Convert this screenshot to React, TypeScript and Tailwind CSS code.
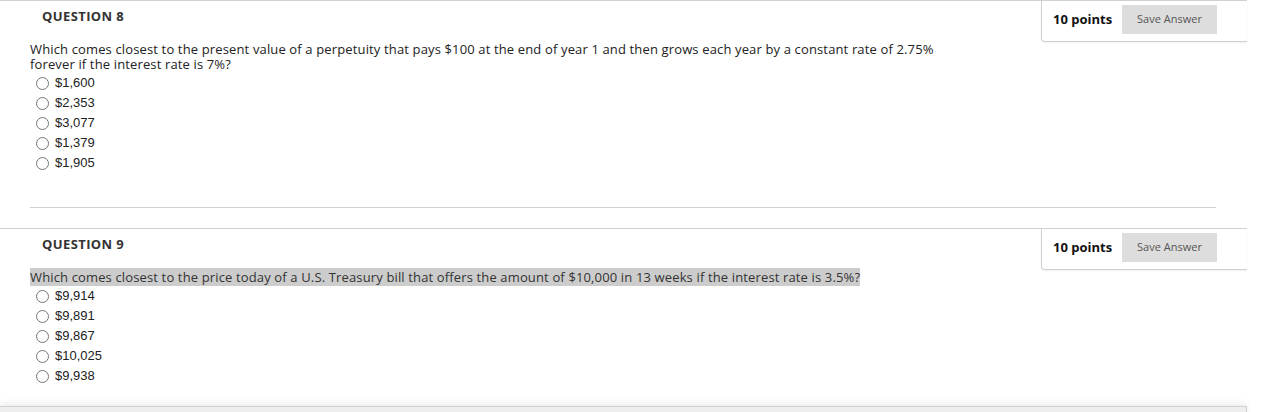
import React from "react";

const open = { fontFamily: '"Open Sans", "Noto Sans", sans-serif' };
const arial = { fontFamily: '"Liberation Sans", Arial, sans-serif' };

function Radio() {
  return (
    <span className="inline-block w-[13px] h-[13px] rounded-full border border-[#767676] bg-white shrink-0" />
  );
}

function Header({ n }: { n: number }) {
  return (
    <div className="flex justify-between border-t border-[#d0d0d0] h-[41px]">
      <div className="pl-[42px] pt-[6px] text-[13px] tracking-[0.4px] font-bold text-[#333]" style={open}>
        QUESTION {n}
      </div>
      <div className="w-[206px] h-[41px] pb-[3px] border-l border-b border-[#d0d0d0] rounded-bl-[4px] flex items-center shadow-[0_1px_2px_rgba(0,0,0,0.06)]">
        <span className="ml-[11px] text-[13px] font-bold text-[#111]" style={open}>
          10 points
        </span>
        <button
          className="ml-auto mr-[30px] w-[95px] h-[29px] bg-[#dddddd] text-[11px] text-[#555]"
          style={open}
        >
          Save Answer
        </button>
      </div>
    </div>
  );
}

function Options({ items }: { items: string[] }) {
  return (
    <div className="flex flex-col">
      {items.map((t) => (
        <div key={t} className="h-[20px] flex items-center pl-[6px] gap-[6px]">
          <Radio />
          <span className="text-[13px] text-[#222]" style={arial}>
            {t}
          </span>
        </div>
      ))}
    </div>
  );
}

export default function App() {
  return (
    <div className="w-[1266px] h-[412px] bg-white overflow-hidden">
      <div className="w-[1247px]">
        <Header n={8} />
        <div className="pl-[30px]">
          <p className="text-[13px] tracking-[0.14px] leading-[15px] text-[#222] pt-[1px] mb-[1px]" style={open}>
            Which comes closest to the present value of a perpetuity that pays $100 at the end of year 1 and then grows each year by a constant rate of 2.75%
            <br />
            forever if the interest rate is 7%?
          </p>
          <Options items={["$1,600", "$2,353", "$3,077", "$1,379", "$1,905"]} />
          <div className="mt-[34px] w-[1186px] border-t border-[#d0d0d0]" />
        </div>
        <div className="mt-[20px]">
          <Header n={9} />
          <div className="pl-[30px]">
            <p className="text-[13px] tracking-[0.14px] leading-[17px] text-[#333]" style={open}>
              <span className="bg-[#cccccc]">
                Which comes closest to the price today of a U.S. Treasury bill that offers the amount of $10,000 in 13 weeks if the interest rate is 3.5%?
              </span>
            </p>
            <Options items={["$9,914", "$9,891", "$9,867", "$10,025", "$9,938"]} />
          </div>
        </div>
        <div className="mt-[20px] h-[20px] bg-[#eeeeee] border-t border-r border-[#cfcfcf] shadow-[0_-3px_6px_rgba(0,0,0,0.07)]" />
      </div>
    </div>
  );
}
